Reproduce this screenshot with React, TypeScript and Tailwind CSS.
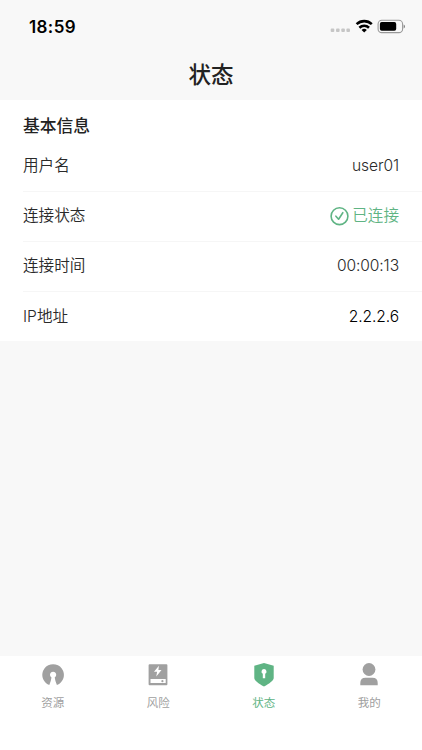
import type { ReactNode } from 'react';
import clsx from 'clsx';

function StatusBar() {
    return (
        <div className="flex h-[52px] items-center justify-between pl-[29px] pr-[17px]">
            <span className="pt-px text-[17px] font-semibold leading-5 tracking-[0.4px] text-black">18:59</span>
            <svg className="h-5 w-[76px]" viewBox="0 0 76 20">
                <g fill="#c6c6c6">
                    <rect x="1.7" y="12.6" width="3.6" height="3.4" rx="1" />
                    <rect x="7" y="12.6" width="3.6" height="3.4" rx="1" />
                    <rect x="12.3" y="12.6" width="3.6" height="3.4" rx="1" />
                    <rect x="17.4" y="12.6" width="3.6" height="3.4" rx="1" />
                </g>
                <g fill="none" stroke="#000" strokeWidth="2.6">
                    <path d="M27.6 8.1a11.1 11.1 0 0 1 15.2 0" />
                    <path d="M30.4 11.7a7 7 0 0 1 9.6 0" />
                </g>
                <path d="M32.6 14a3.9 3.9 0 0 1 5.2 0L35.2 16.6z" fill="#000" />
                <rect x="49.1" y="4.3" width="24.5" height="12.3" rx="3.7" fill="none" stroke="#999" strokeWidth="1.1" />
                <rect x="50.9" y="6.1" width="16.3" height="8.7" rx="1.8" fill="#000" />
                <path d="M74.7 8.4q1.2.6 1.2 2t-1.2 2z" fill="#777" />
            </svg>
        </div>
    );
}

function InfoRow({ label, children, last }: { label: string; children: ReactNode; last?: boolean }) {
    return (
        <div
            className={clsx(
                'ml-[23px] flex h-[50px] items-center justify-between pr-[23px] text-[15.6px] font-[350] leading-6',
                !last && 'border-b border-[#f6f6f6]'
            )}
        >
            <span>{label}</span>
            {children}
        </div>
    );
}

function Tab({ label, active, children }: { label: string; active?: boolean; children: ReactNode }) {
    return (
        <button className={clsx('flex flex-1 flex-col items-center pt-[6px]', active ? 'text-[#5fb484]' : 'text-[#a0a0a0]')}>
            <svg className="h-[26px] w-[26px]" viewBox="0 0 26 26" fill="currentColor">
                {children}
            </svg>
            <span className="mt-[7px] text-[11.5px] leading-4">{label}</span>
        </button>
    );
}

export default function App() {
    return (
        <div className="flex h-[750px] w-[422px] flex-col overflow-hidden bg-[#f8f8f8] font-['Inter','Noto_Sans_CJK_SC',sans-serif] text-[#2a2a2a]">
            <StatusBar />
            <header className="flex h-12 items-center justify-center pb-[3px]">
                <h1 className="text-[22.5px] font-medium leading-8 text-[#222]">状态</h1>
            </header>

            <main className="flex-1">
                <section className="h-[241px] bg-white pt-[13px]">
                    <h2 className="ml-[23px] h-[28.5px] text-[16.8px] font-medium leading-[26px] text-[#222]">基本信息</h2>
                    <InfoRow label="用户名">
                        <span className="tracking-[-0.1px]">user01</span>
                    </InfoRow>
                    <InfoRow label="连接状态">
                        <span className="flex items-center gap-[3px] text-[#5fb484]">
                            <svg className="h-[19px] w-[19px]" viewBox="0 0 19 19" fill="none" stroke="currentColor" strokeWidth="1.6">
                                <circle cx="9.5" cy="9.2" r="8.4" />
                                <path d="M5.9 9.2l2.7 3 4.2-6.5" strokeLinecap="round" strokeLinejoin="round" />
                            </svg>
                            已连接
                        </span>
                    </InfoRow>
                    <InfoRow label="连接时间">
                        <span className="tracking-[-0.1px]">00:00:13</span>
                    </InfoRow>
                    <InfoRow label="IP地址" last>
                        <span className="tracking-[-0.1px] text-black">2.2.2.6</span>
                    </InfoRow>
                </section>
            </main>

            <nav className="flex h-[94px] bg-white">
                <Tab label="资源">
                    <path d="M9.3 23.1A10.8 10.8 0 1 1 16.9 23.1Q15.3 19.5 14.7 15.4A3.1 3.1 0 1 0 11.5 15.4Q10.9 19.5 9.3 23.1z" />
                </Tab>
                <Tab label="风险">
                    <path
                        fillRule="evenodd"
                        d="M4.6 2.2h16.8a1 1 0 0 1 1 1v19a1 1 0 0 1-1 1H4.6a1 1 0 0 1-1-1v-19a1 1 0 0 1 1-1zM13.9 3.8L9 9.8h3.1l-.8 4.7 5.2-6.4h-3.1zM5.5 17v4.1h15.2V17z"
                    />
                    <circle cx="17.4" cy="19.2" r="1.1" />
                </Tab>
                <Tab label="状态" active>
                    <path
                        fillRule="evenodd"
                        d="M13 1.1l9.7 2.6V16c0 2.5-4.2 5.4-9.7 8.6C7.5 21.4 3.3 18.5 3.3 16V3.7zM13 7.1a2.5 2.5 0 0 0-1.2 4.7V16.2h2.4v-4.4A2.5 2.5 0 0 0 13 7.1z"
                    />
                </Tab>
                <Tab label="我的">
                    <circle cx="13" cy="7.5" r="6.4" />
                    <path d="M4.3 23.3v-2.2q0-5.4 5.2-5.4h7q5.2 0 5.2 5.4v2.2z" />
                </Tab>
            </nav>
        </div>
    );
}
